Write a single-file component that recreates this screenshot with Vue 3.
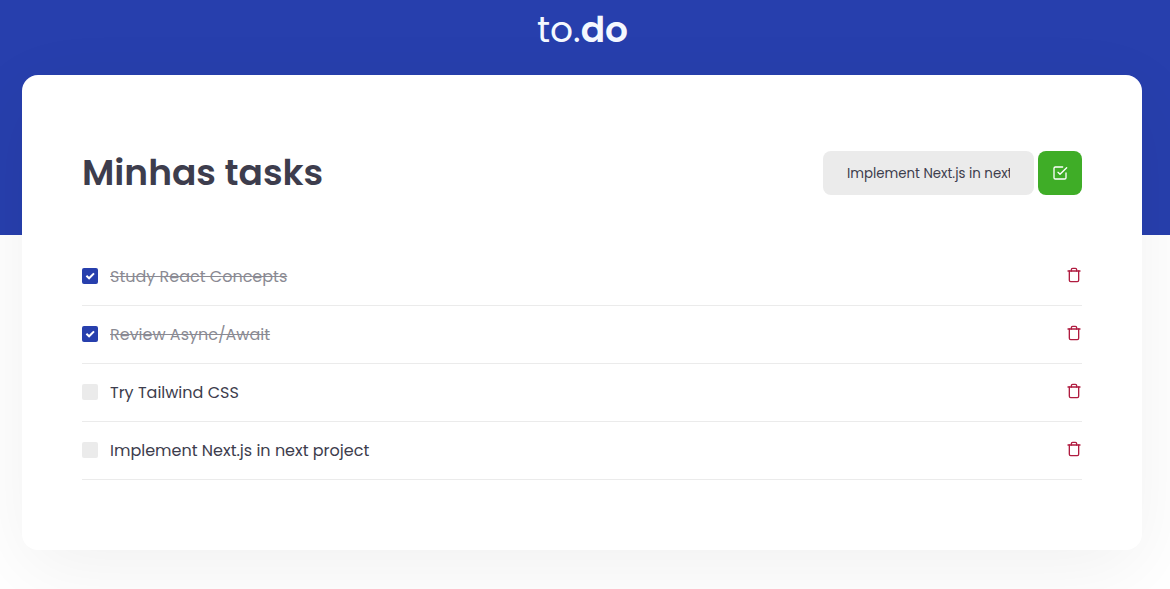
<script setup>
import { ref } from 'vue'

const draft = ref('Implement Next.js in next project')
const tasks = ref([
  { id: 1, title: 'Study React Concepts', done: true },
  { id: 2, title: 'Review Async/Await', done: true },
  { id: 3, title: 'Try Tailwind CSS', done: false },
  { id: 4, title: 'Implement Next.js in next project', done: false },
])

function addTask() {
  if (!draft.value) return
  tasks.value.push({ id: Date.now(), title: draft.value, done: false })
}

function removeTask(id) {
  tasks.value = tasks.value.filter((task) => task.id !== id)
}
</script>

<template>
  <div class="page">
    <header class="header">
      <div class="logo"><span class="logo-light">to.</span><span class="logo-bold">do</span></div>
    </header>
    <main class="card">
      <div class="top">
        <h2>Minhas tasks</h2>
        <div class="form">
          <input v-model="draft" type="text" class="field" />
          <button type="button" class="add" @click="addTask">
            <svg viewBox="0 0 24 24" width="16" height="16">
              <polyline points="9 11 12 14 22 4" />
              <path d="M21 12v7a2 2 0 0 1-2 2H5a2 2 0 0 1-2-2V5a2 2 0 0 1 2-2h11" />
            </svg>
          </button>
        </div>
      </div>
      <ul class="list">
        <li v-for="task in tasks" :key="task.id" class="row" :class="{ done: task.done }">
          <span class="check" @click="task.done = !task.done">
            <svg v-if="task.done" viewBox="0 0 16 16" width="16" height="16">
              <path d="M4.4 7.7 7.1 10.3 12 5.4" />
            </svg>
          </span>
          <p>{{ task.title }}</p>
          <button type="button" class="remove" @click="removeTask(task.id)">
            <svg viewBox="0 0 24 24" width="16" height="16">
              <polyline points="3 6 5 6 21 6" />
              <path d="M19 6v14a2 2 0 0 1-2 2H7a2 2 0 0 1-2-2V6m3 0V4a2 2 0 0 1 2-2h4a2 2 0 0 1 2 2v2" />
            </svg>
          </button>
        </li>
      </ul>
    </main>
  </div>
</template>

<style>
body {
  margin: 0;
  overflow: hidden;
}
</style>

<style scoped>
.page {
  box-sizing: border-box;
  height: 589px;
  padding-right: 6px;
  overflow: hidden;
  background: linear-gradient(#273fad 235px, #ffffff 235px);
  font-family: Poppins, Inter, "Liberation Sans", sans-serif;
  color: #3d3d4d;
}
.header {
  display: flex;
  justify-content: center;
  height: 75px;
}
.logo {
  height: 60px;
  margin-left: 1px;
  line-height: 60px;
  font-size: 36px;
  color: #f4f8ff;
  white-space: nowrap;
}
.logo-light { font-weight: 400; }
.logo-bold { font-weight: 600; }
.card {
  box-sizing: border-box;
  width: 1120px;
  height: 475px;
  margin: 0 auto;
  padding: 76px 60px 0;
  border-radius: 16px;
  background: #fff;
  box-shadow: 0 20px 80px rgba(0, 0, 0, 0.06);
}
.top {
  display: flex;
  align-items: center;
  justify-content: space-between;
  height: 44px;
}
h2 {
  margin: 0;
  font-size: 36px;
  font-weight: 600;
  line-height: 44px;
  white-space: nowrap;
}
.form {
  display: flex;
  gap: 4px;
}
.field {
  box-sizing: border-box;
  width: 211px;
  height: 44px;
  padding: 1px 24px 0;
  border: 0;
  border-radius: 8px;
  outline: 0;
  background: #ebebeb;
  font: 400 13.33px Poppins, Inter, "Liberation Sans", sans-serif;
  color: #3d3d4d;
}
button {
  padding: 0;
  border: 0;
  background: none;
}
svg {
  display: block;
  fill: none;
  stroke: currentColor;
  stroke-width: 2;
  stroke-linecap: round;
  stroke-linejoin: round;
}
.add {
  display: grid;
  place-items: center;
  width: 44px;
  height: 44px;
  border-radius: 8px;
  background: #3fad27;
  color: #fff;
}
.list {
  margin: 53px 0 0;
  padding: 0;
  list-style: none;
}
.row {
  box-sizing: border-box;
  display: flex;
  align-items: center;
  height: 58px;
  border-bottom: 1px solid #ebebeb;
}
.check {
  width: 16px;
  height: 16px;
  margin: 0 12px 2px 0;
  border-radius: 2px;
  background: #ebebeb;
  color: #fff;
}
.check svg {
  stroke-linecap: butt;
  stroke-linejoin: miter;
}
.done .check { background: #273fad; }
p {
  margin: 0;
  font-size: 16px;
  font-weight: 400;
  line-height: 24px;
  white-space: nowrap;
}
.done p {
  text-decoration: line-through;
  opacity: 0.6;
}
.remove {
  margin: 0 0 4px auto;
  color: #b01c40;
}
</style>
